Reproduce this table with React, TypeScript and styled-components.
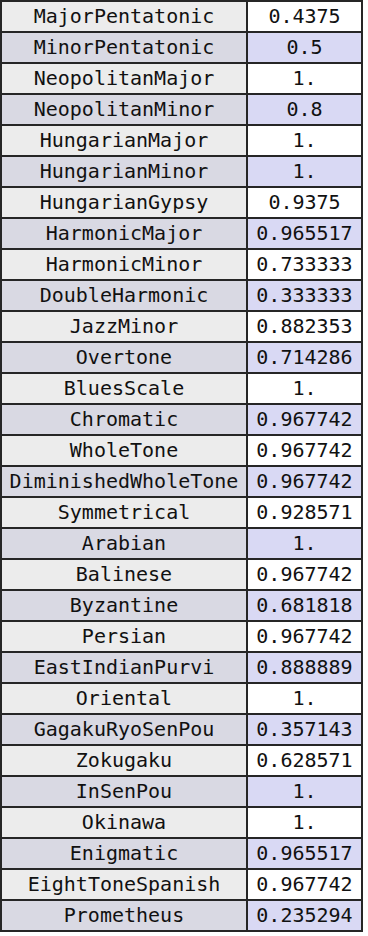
import styled, { createGlobalStyle } from 'styled-components';

const scales: [string, string][] = [
  ['MajorPentatonic', '0.4375'],
  ['MinorPentatonic', '0.5'],
  ['NeopolitanMajor', '1.'],
  ['NeopolitanMinor', '0.8'],
  ['HungarianMajor', '1.'],
  ['HungarianMinor', '1.'],
  ['HungarianGypsy', '0.9375'],
  ['HarmonicMajor', '0.965517'],
  ['HarmonicMinor', '0.733333'],
  ['DoubleHarmonic', '0.333333'],
  ['JazzMinor', '0.882353'],
  ['Overtone', '0.714286'],
  ['BluesScale', '1.'],
  ['Chromatic', '0.967742'],
  ['WholeTone', '0.967742'],
  ['DiminishedWholeTone', '0.967742'],
  ['Symmetrical', '0.928571'],
  ['Arabian', '1.'],
  ['Balinese', '0.967742'],
  ['Byzantine', '0.681818'],
  ['Persian', '0.967742'],
  ['EastIndianPurvi', '0.888889'],
  ['Oriental', '1.'],
  ['GagakuRyoSenPou', '0.357143'],
  ['Zokugaku', '0.628571'],
  ['InSenPou', '1.'],
  ['Okinawa', '1.'],
  ['Enigmatic', '0.965517'],
  ['EightToneSpanish', '0.967742'],
  ['Prometheus', '0.235294'],
];

function App() {
  return (
    <>
      <GlobalStyle />
      <StyledTable>
        <tbody>
          {scales.map(([name, value], i) => (
            <tr key={name}>
              <NameCell $alt={i % 2 === 1}>{name}</NameCell>
              <ValueCell $alt={i % 2 === 1}>{value}</ValueCell>
            </tr>
          ))}
        </tbody>
      </StyledTable>
    </>
  );
}

export default App;

const GlobalStyle = createGlobalStyle`
  body {
    margin: 0;
    background: #fff;
  }
`;

const StyledTable = styled.table`
  border-collapse: collapse;
  border: 2px solid #262626;
  width: 363px;
  font-family: 'DejaVu Sans Mono', 'Liberation Mono', monospace;
  font-size: 20px;
  color: #111;
`;

const Cell = styled.td<{ $alt: boolean }>`
  border: 2px solid #262626;
  height: 27px;
  padding: 0 1px 2px;
  text-align: center;
  white-space: nowrap;
  line-height: 26px;
`;

const NameCell = styled(Cell)`
  width: 242px;
  background: ${props => (props.$alt ? '#d9d9e3' : '#ececec')};
`;

const ValueCell = styled(Cell)`
  background: ${props => (props.$alt ? '#d9d9f4' : '#ffffff')};
`;
